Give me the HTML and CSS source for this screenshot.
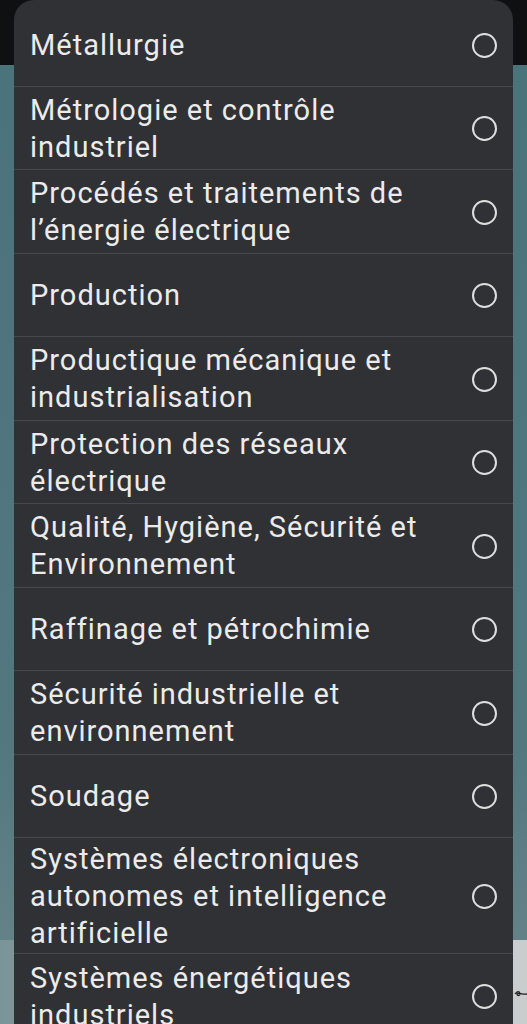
FILE: index.html
```html
<!DOCTYPE html>
<html lang="fr">
<head>
<meta charset="utf-8">
<title>Spécialités</title>
<link rel="stylesheet" href="styles.css">
</head>
<body>
<div class="screen">
  <div class="topbar"></div>
  <div class="backdrop">
    <div class="behind-card">
      <svg class="scribble" width="14" height="14" viewBox="0 0 14 14"><path d="M1 8 C3 5 6 5 6 8 C6 10 3 10 3 8 C5 6 8 9 13 8" fill="none" stroke="#222" stroke-width="1.3"/></svg>
    </div>
  </div>

  <div class="dialog">
    <ul class="options">
      <li class="option"><span class="label">Métallurgie</span><span class="radio"></span></li>
      <li class="option"><span class="label">Métrologie et contrôle industriel</span><span class="radio"></span></li>
      <li class="option"><span class="label">Procédés et traitements de l’énergie électrique</span><span class="radio"></span></li>
      <li class="option"><span class="label">Production</span><span class="radio"></span></li>
      <li class="option"><span class="label">Productique mécanique et industrialisation</span><span class="radio"></span></li>
      <li class="option"><span class="label">Protection des réseaux électrique</span><span class="radio"></span></li>
      <li class="option"><span class="label">Qualité, Hygiène, Sécurité et Environnement</span><span class="radio"></span></li>
      <li class="option"><span class="label">Raffinage et pétrochimie</span><span class="radio"></span></li>
      <li class="option"><span class="label">Sécurité industrielle et environnement</span><span class="radio"></span></li>
      <li class="option"><span class="label">Soudage</span><span class="radio"></span></li>
      <li class="option"><span class="label">Systèmes électroniques autonomes et intelligence artificielle</span><span class="radio"></span></li>
      <li class="option"><span class="label">Systèmes énergétiques industriels</span><span class="radio"></span></li>
    </ul>
  </div>
</div>
</body>
</html>
```

FILE: styles.css
```css
* { box-sizing: border-box; }

html, body {
  margin: 0;
  padding: 0;
}

body {
  width: 527px;
  height: 1024px;
  overflow: hidden;
  background: #4d767e;
  font-family: Roboto, "Noto Sans", "Liberation Sans", sans-serif;
}

.screen {
  position: relative;
  width: 527px;
  height: 1024px;
  display: flex;
  flex-direction: column;
}

.topbar {
  height: 65px;
  background: #0f1011;
  flex: none;
}

.backdrop {
  flex: 1;
  background: linear-gradient(180deg, #4b737c 0%, #52777f 70%, #6a878b 100%);
  display: flex;
  flex-direction: column;
  justify-content: flex-end;
  align-items: flex-end;
}

.behind-card {
  width: 100%;
  height: 84px;
  background: linear-gradient(90deg, #7b9497 0%, #c9cdcd 95%);
  display: flex;
  justify-content: flex-end;
  padding-top: 46px;
}

.scribble {
  margin-right: -1px;
}

.dialog {
  position: absolute;
  top: 0;
  left: 14px;
  width: 499px;
  height: 1046px;
  background: #303135;
  border-radius: 20px;
  overflow: hidden;
  padding-top: 3px;
}

.options {
  list-style: none;
  margin: 0;
  padding: 0;
}

.option {
  display: flex;
  align-items: center;
  justify-content: space-between;
  min-height: 83.5px;
  padding: 3px 16px 1px 16px;
  border-bottom: 1px solid #48494d;
  gap: 20px;
}

.option:last-child {
  border-bottom: none;
}

.label {
  color: #ebebeb;
  font-size: 29px;
  line-height: 37px;
  flex: 1;
  letter-spacing: 1px;
}

.radio {
  flex: none;
  width: 25px;
  height: 25px;
  border-radius: 50%;
  border: 2.6px solid #dedede;
}
```
